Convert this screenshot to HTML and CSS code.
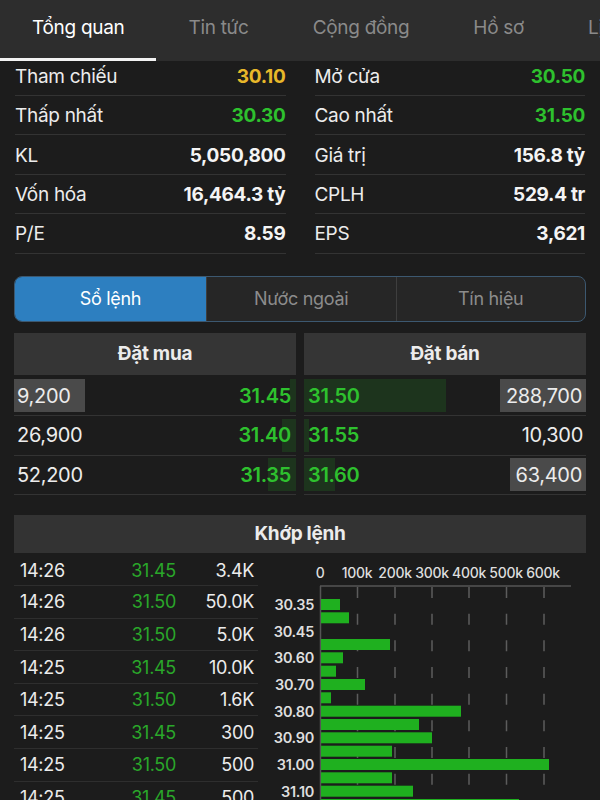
FILE: index.html
```html
<!DOCTYPE html>
<html lang="vi">

<head>
    <meta charset="UTF-8">
    <meta name="viewport" content="width=device-width, initial-scale=1.0">
    <title>Tổng quan</title>
    <link rel="stylesheet" href="styles.css">
</head>

<body>
    <div class="tabs">
        <span class="tab active">Tổng quan</span>
        <span class="tab">Tin tức</span>
        <span class="tab">Cộng đồng</span>
        <span class="tab">Hồ sơ</span>
        <span class="tab">Lịch sử</span>
    </div>

    <div class="stats">
        <div class="stat"><span class="label">Tham chiếu</span><span class="val ref">30.10</span></div>
        <div class="stat"><span class="label">Mở cửa</span><span class="val up">30.50</span></div>
        <div class="stat"><span class="label">Thấp nhất</span><span class="val up">30.30</span></div>
        <div class="stat"><span class="label">Cao nhất</span><span class="val up">31.50</span></div>
        <div class="stat"><span class="label">KL</span><span class="val">5,050,800</span></div>
        <div class="stat"><span class="label">Giá trị</span><span class="val">156.8 tỷ</span></div>
        <div class="stat"><span class="label">Vốn hóa</span><span class="val">16,464.3 tỷ</span></div>
        <div class="stat"><span class="label">CPLH</span><span class="val">529.4 tr</span></div>
        <div class="stat"><span class="label">P/E</span><span class="val">8.59</span></div>
        <div class="stat"><span class="label">EPS</span><span class="val">3,621</span></div>
    </div>

    <div class="segment">
        <div class="seg active">Sổ lệnh</div>
        <div class="seg">Nước ngoài</div>
        <div class="seg">Tín hiệu</div>
    </div>

    <div class="book">
        <div class="book-col buy">
            <div class="book-head">Đặt mua</div>
            <div class="book-row" style="--d: 6px"><span class="qty hl wide">9,200</span><span class="px">31.45</span></div>
            <div class="book-row" style="--d: 14px"><span class="qty">26,900</span><span class="px">31.40</span></div>
            <div class="book-row" style="--d: 28px"><span class="qty">52,200</span><span class="px">31.35</span></div>
        </div>
        <div class="book-col sell">
            <div class="book-head">Đặt bán</div>
            <div class="book-row" style="--d: 142px"><span class="px">31.50</span><span class="qty hl">288,700</span></div>
            <div class="book-row" style="--d: 5px"><span class="px">31.55</span><span class="qty">10,300</span></div>
            <div class="book-row" style="--d: 31px"><span class="px">31.60</span><span class="qty hl">63,400</span></div>
        </div>
    </div>

    <div class="match-head">Khớp lệnh</div>

    <div class="match">
        <div class="trades">
            <div class="trade"><span>14:26</span><span class="tp">31.45</span><span class="tv">3.4K</span></div>
            <div class="trade"><span>14:26</span><span class="tp">31.50</span><span class="tv">50.0K</span></div>
            <div class="trade"><span>14:26</span><span class="tp">31.50</span><span class="tv">5.0K</span></div>
            <div class="trade"><span>14:25</span><span class="tp">31.45</span><span class="tv">10.0K</span></div>
            <div class="trade"><span>14:25</span><span class="tp">31.50</span><span class="tv">1.6K</span></div>
            <div class="trade"><span>14:25</span><span class="tp">31.45</span><span class="tv">300</span></div>
            <div class="trade"><span>14:25</span><span class="tp">31.50</span><span class="tv">500</span></div>
            <div class="trade"><span>14:25</span><span class="tp">31.45</span><span class="tv">500</span></div>
        </div>

        <div class="chart">
            <svg width="321" height="247" viewBox="0 0 321 247">
                <!-- grid -->
                <g class="grid">
                    <line x1="92.5" y1="32" x2="92.5" y2="247" />
                    <line x1="130" y1="32" x2="130" y2="247" />
                    <line x1="167" y1="32" x2="167" y2="247" />
                    <line x1="204" y1="32" x2="204" y2="247" />
                    <line x1="241.5" y1="32" x2="241.5" y2="247" />
                    <line x1="279" y1="32" x2="279" y2="247" />
                </g>
                <line class="axis" x1="55" y1="31" x2="306" y2="31" />
                <line class="axis" x1="55.5" y1="31" x2="55.5" y2="247" />

                <g class="ticks">
                    <text x="55" y="23" text-anchor="middle">0</text>
                    <text x="92" y="23" text-anchor="middle">100k</text>
                    <text x="130" y="23" text-anchor="middle">200k</text>
                    <text x="167" y="23" text-anchor="middle">300k</text>
                    <text x="204" y="23" text-anchor="middle">400k</text>
                    <text x="241" y="23" text-anchor="middle">500k</text>
                    <text x="278" y="23" text-anchor="middle">600k</text>
                </g>

                <g class="bars">
                    <rect x="56" y="44" width="19" height="11" />
                    <rect x="56" y="57.3" width="28" height="11" />
                    <rect x="56" y="84" width="69" height="11" />
                    <rect x="56" y="97.3" width="22" height="11" />
                    <rect x="56" y="110.7" width="15" height="11" />
                    <rect x="56" y="124" width="44" height="11" />
                    <rect x="56" y="137.3" width="10" height="11" />
                    <rect x="56" y="150.7" width="140" height="11" />
                    <rect x="56" y="164" width="98" height="11" />
                    <rect x="56" y="177.3" width="111" height="11" />
                    <rect x="56" y="190.7" width="71" height="11" />
                    <rect x="56" y="204" width="228" height="11" />
                    <rect x="56" y="217.3" width="71" height="11" />
                    <rect x="56" y="230.7" width="92" height="11" />
                    <rect x="56" y="244" width="198" height="11" />
                </g>

                <g class="levels">
                    <text x="49" y="55">30.35</text>
                    <text x="49" y="81.7">30.45</text>
                    <text x="49" y="108.3">30.60</text>
                    <text x="49" y="135">30.70</text>
                    <text x="49" y="161.7">30.80</text>
                    <text x="49" y="188.3">30.90</text>
                    <text x="49" y="215">31.00</text>
                    <text x="49" y="241.7">31.10</text>
                </g>
            </svg>
        </div>
    </div>
</body>

</html>
```

FILE: styles.css
```css
*,
*::before,
*::after {
    box-sizing: border-box;
}

body {
    margin: 0;
    width: 600px;
    height: 800px;
    overflow: hidden;
    background-color: #1c1c1c;
    color: #ececec;
    font-family: Inter, "Noto Sans", sans-serif;
    font-size: 19px;
    letter-spacing: -0.3px;
}

/* top tabs */

.tabs {
    display: flex;
    height: 61px;
    background-color: #2d2d2d;
    white-space: nowrap;
    overflow: hidden;
}

.tab {
    flex-shrink: 0;
    padding: 0 32px;
    line-height: 56px;
    color: #8a8a8a;
    border-bottom: 3px solid transparent;
}

.tab.active {
    color: #ffffff;
    border-bottom-color: #f2f2f2;
}

/* overview figures */

.stats {
    display: grid;
    grid-template-columns: 1fr 1fr;
    column-gap: 29px;
    padding: 0 15px;
}

.stat {
    display: flex;
    justify-content: space-between;
    align-items: center;
    height: 39.4px;
    padding-top: 1px;
    border-bottom: 1px solid #333333;
}

.stat:nth-child(-n+2) {
    height: 35px;
    padding-top: 0;
    padding-bottom: 4px;
}

.val {
    font-weight: 700;
    color: #f4f4f4;
}

.val.ref {
    color: #e8b82a;
}

.val.up {
    color: #2ec12e;
}

/* segmented control */

.segment {
    display: grid;
    grid-template-columns: 191px 1fr 1fr;
    height: 46px;
    margin: 22px 14px 0;
    border: 1.5px solid #3c5870;
    border-radius: 8px;
    overflow: hidden;
    background-color: #262626;
}

.seg {
    display: flex;
    justify-content: center;
    align-items: center;
    color: #8c8c8c;
    font-size: 18px;
    border-left: 1px solid #3e3e3e;
}

.seg.active {
    background-color: #2d7fc0;
    color: #ffffff;
    border-left: none;
}

/* order book */

.book {
    display: grid;
    grid-template-columns: 1fr 1fr;
    column-gap: 8px;
    margin: 11px 14px 0;
}

.book-head {
    height: 42px;
    line-height: 42px;
    margin-bottom: 2px;
    text-align: center;
    font-weight: 700;
    background-color: #353535;
}

.book-row {
    display: flex;
    justify-content: space-between;
    align-items: center;
    height: 39.5px;
    border-bottom: 1px solid #333333;
    font-size: 20px;
    background: linear-gradient(#1d341d, #1d341d) no-repeat;
    background-size: var(--d) 33px;
}

.buy .book-row {
    background-position: right center;
}

.sell .book-row {
    background-position: left center;
}

.qty {
    display: flex;
    align-items: center;
    height: 33px;
    padding: 0 3px;
}

.qty.hl {
    background-color: #4a4a4a;
    padding: 0 4px 0 6px;
}

.qty.wide {
    padding: 0 14px 0 3px;
}

.px {
    font-weight: 600;
    color: #2ec12e;
}

.buy .px {
    padding-right: 5px;
}

.sell .px {
    padding-left: 4px;
}

/* matched orders */

.match-head {
    height: 38px;
    line-height: 38px;
    margin: 20px 14px 0;
    text-align: center;
    font-weight: 700;
    background-color: #333333;
}

.match {
    display: flex;
    gap: 7px;
    margin: 0 14px;
    padding-top: 2px;
}

.trades {
    width: 244px;
    flex-shrink: 0;
}

.trade {
    display: grid;
    grid-template-columns: 1fr 60px 78px;
    align-items: center;
    height: 32.6px;
    padding: 0 4px 0 6px;
    border-bottom: 1px solid #2e2e2e;
    font-size: 18px;
}

.trade:first-child {
    height: 31px;
}

.tp {
    text-align: right;
    color: #2aa72a;
}

.tv {
    text-align: right;
}

.chart svg {
    display: block;
}

.grid line {
    stroke: #5c5c5c;
    stroke-width: 1.5;
    stroke-dasharray: 11 15.67;
}

.axis {
    stroke: #555555;
    stroke-width: 1.5;
}

.ticks text,
.levels text {
    font-family: Inter, sans-serif;
    font-size: 14px;
    font-weight: 500;
    letter-spacing: -0.3px;
    fill: #dedede;
}

.levels text {
    font-size: 14.5px;
    font-weight: 600;
    text-anchor: end;
}

.bars rect {
    fill: #1fb01f;
}
```
